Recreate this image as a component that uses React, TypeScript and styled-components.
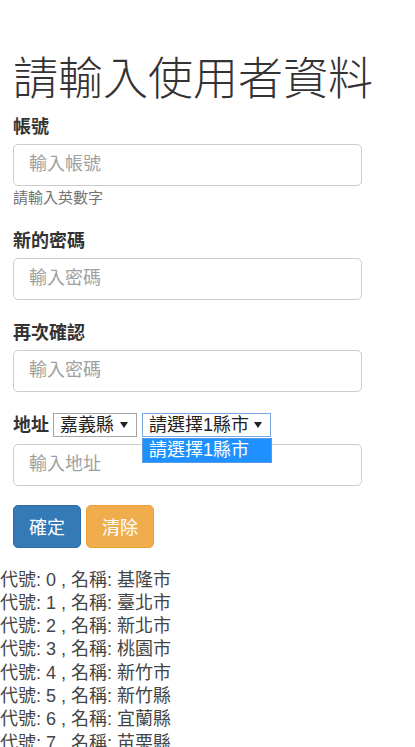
import React from 'react';
import styled, { createGlobalStyle } from 'styled-components';

const GlobalStyle = createGlobalStyle`
  html, body {
    margin: 0;
    padding: 0;
    background: #fff;
  }
  body {
    font-family: "Liberation Sans", "Noto Sans CJK TC", sans-serif;
    font-size: 18px;
    color: #333;
  }
  * {
    box-sizing: border-box;
  }
`;

const Container = styled.div`
  padding: 0 13px;
  width: 375px;
`;

const Title = styled.h1`
  margin: 55px 0 10px;
  font-size: 45px;
  line-height: 1.1;
  font-weight: 300;
  color: #333;
  white-space: nowrap;
`;

const FormGroup = styled.div`
  margin-bottom: 21px;
`;

const Label = styled.label`
  display: block;
  font-weight: 700;
  font-size: 18px;
  line-height: 24px;
  margin-bottom: 5px;
  color: #333;
`;

const Input = styled.input`
  display: block;
  width: 349px;
  height: 42px;
  padding: 0 15px;
  font-size: 18px;
  font-family: inherit;
  color: #555;
  border: 1px solid #ccc;
  border-radius: 5px;
  outline: none;

  &::placeholder {
    color: #a0a0a0;
  }
`;

const HelpText = styled.span`
  display: block;
  margin-top: 2px;
  font-size: 15px;
  line-height: 20px;
  color: #737373;
`;

const AddressRow = styled.div`
  display: flex;
  align-items: center;
  gap: 4px;
  height: 24px;
  margin-bottom: 7px;
`;

const InlineLabel = styled.span`
  font-weight: 700;
  font-size: 18px;
  line-height: 24px;
  color: #333;
`;

const SelectWrap = styled.div<{ $offset?: boolean }>`
  position: relative;
  margin-left: ${p => (p.$offset ? '1px' : '0')};
`;

const SelectBox = styled.div<{ $focused?: boolean; $width: number }>`
  display: flex;
  align-items: center;
  justify-content: space-between;
  width: ${p => p.$width}px;
  height: 24px;
  padding: 0 8px 0 6px;
  border: 1px solid ${p => (p.$focused ? '#7aa6e6' : '#a6a6a6')};
  background: #fff;
  font-size: 18px;
  line-height: 22px;
  color: #222;
  white-space: nowrap;
`;

const Arrow = styled.svg`
  flex: none;
  width: 8px;
  height: 6px;
`;

const DropList = styled.div`
  position: absolute;
  top: 25px;
  left: 0;
  width: 130px;
  border: 1px solid #5a9be6;
  background: #fff;
  z-index: 2;
`;

const DropOption = styled.div<{ $active?: boolean }>`
  height: 23px;
  padding: 0 6px;
  font-size: 18px;
  line-height: 23px;
  white-space: nowrap;
  background: ${p => (p.$active ? '#1e90ff' : '#fff')};
  color: ${p => (p.$active ? '#fff' : '#222')};
`;

const ButtonRow = styled.div`
  display: flex;
  gap: 5px;
  margin-top: 19px;
`;

const Button = styled.button<{ $variant: 'primary' | 'warning' }>`
  height: 43px;
  padding: 0 15px;
  font-size: 18px;
  font-family: inherit;
  color: #fff;
  border-radius: 5px;
  cursor: pointer;
  background: ${p => (p.$variant === 'primary' ? '#337ab7' : '#f0ad4e')};
  border: 1px solid ${p => (p.$variant === 'primary' ? '#2e6da4' : '#eea236')};
`;

const CityList = styled.div`
  margin-top: 21px;
`;

const CityItem = styled.div`
  font-size: 18px;
  line-height: 23.33px;
  color: #444;
  white-space: nowrap;
`;

const cities = ['基隆市', '臺北市', '新北市', '桃園市', '新竹市', '新竹縣', '宜蘭縣', '苗栗縣'];

const DownArrow = () => (
  <Arrow viewBox="0 0 8 6">
    <polygon points="0,0 8,0 4,6" fill="#222" />
  </Arrow>
);

export default function App() {
  return (
    <>
      <GlobalStyle />
      <Container>
        <Title>請輸入使用者資料</Title>

        <FormGroup>
          <Label>帳號</Label>
          <Input placeholder="輸入帳號" />
          <HelpText>請輸入英數字</HelpText>
        </FormGroup>

        <FormGroup>
          <Label>新的密碼</Label>
          <Input type="password" placeholder="輸入密碼" />
        </FormGroup>

        <FormGroup>
          <Label>再次確認</Label>
          <Input type="password" placeholder="輸入密碼" />
        </FormGroup>

        <AddressRow>
          <InlineLabel>地址</InlineLabel>
          <SelectWrap>
            <SelectBox $width={84}>
              嘉義縣
              <DownArrow />
            </SelectBox>
          </SelectWrap>
          <SelectWrap $offset>
            <SelectBox $width={129} $focused>
              請選擇1縣市
              <DownArrow />
            </SelectBox>
            <DropList>
              <DropOption $active>請選擇1縣市</DropOption>
            </DropList>
          </SelectWrap>
        </AddressRow>
        <Input placeholder="輸入地址" />

        <ButtonRow>
          <Button $variant="primary">確定</Button>
          <Button $variant="warning">清除</Button>
        </ButtonRow>
      </Container>

      <CityList>
        {cities.map((name, i) => (
          <CityItem key={name}>
            代號: {i} , 名稱: {name}
          </CityItem>
        ))}
      </CityList>
    </>
  );
}
